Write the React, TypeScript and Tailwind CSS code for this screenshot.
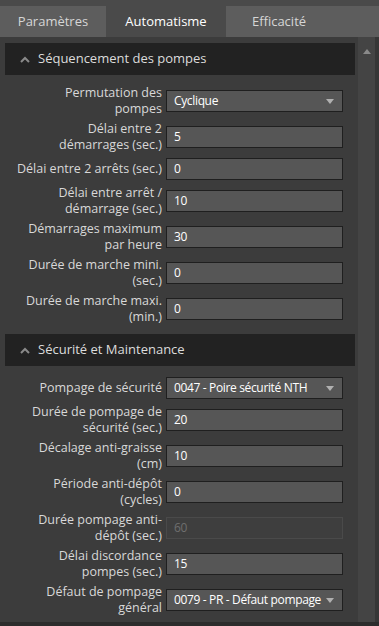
import React from "react";

type Field = {
  lines: string[];
  value: string;
  kind?: "select" | "input" | "disabled";
};

const sequence: Field[] = [
  { lines: ["Permutation des", "pompes"], value: "Cyclique", kind: "select" },
  { lines: ["Délai entre 2", "démarrages (sec.)"], value: "5" },
  { lines: ["Délai entre 2 arrêts (sec.)"], value: "0" },
  { lines: ["Délai entre arrêt /", "démarrage (sec.)"], value: "10" },
  { lines: ["Démarrages maximum", "par heure"], value: "30" },
  { lines: ["Durée de marche mini.", "(sec.)"], value: "0" },
  { lines: ["Durée de marche maxi.", "(min.)"], value: "0" },
];

const safety: Field[] = [
  { lines: ["Pompage de sécurité"], value: "0047 - Poire sécurité NTH", kind: "select" },
  { lines: ["Durée de pompage de", "sécurité (sec.)"], value: "20" },
  { lines: ["Décalage anti-graisse", "(cm)"], value: "10" },
  { lines: ["Période anti-dépôt", "(cycles)"], value: "0" },
  { lines: ["Durée pompage anti-", "dépôt (sec.)"], value: "60", kind: "disabled" },
  { lines: ["Délai discordance", "pompes (sec.)"], value: "15" },
  { lines: ["Défaut de pompage", "général"], value: "0079 - PR - Défaut pompage", kind: "select" },
];

const Chevron = () => (
  <svg width="10" height="7" viewBox="0 0 10 7" className="shrink-0">
    <path d="M1 6 L5 2 L9 6" fill="none" stroke="#8a8a8a" strokeWidth="2" />
  </svg>
);

const Row = ({ f }: { f: Field }) => {
  const box =
    f.kind === "disabled"
      ? "bg-[#3e3e3e] border-[#4a4a4a] text-[#6e6e6e]"
      : "bg-[#565656] border-[#1f1f1f] text-white";
  return (
    <div className="flex items-center min-h-[24px]">
      <div className="w-[161px] pr-[4px] text-right leading-[16px] text-[#d8d8d8] whitespace-nowrap">
        {f.lines.map((l) => (
          <div key={l}>{l}</div>
        ))}
      </div>
      <div
        className={`w-[177px] h-[22px] border flex items-center pl-[7px] pr-[8px] ${box}`}
      >
        <span className="flex-1 whitespace-nowrap text-[12px] tracking-[-0.35px]">{f.value}</span>
        {f.kind === "select" && (
          <svg width="8" height="5" viewBox="0 0 8 5" className="shrink-0">
            <path d="M0 0 H8 L4 5 Z" fill="#b0b0b0" />
          </svg>
        )}
      </div>
    </div>
  );
};

const Section = ({ title, fields, last }: { title: string; fields: Field[]; last?: boolean }) => (
  <div>
    <div className="h-[32px] bg-[#222222] flex items-center pl-[15px] gap-[8px] text-[#dcdcdc] text-[13px]">
      <Chevron />
      <span>{title}</span>
    </div>
    <div className={`pt-[10px] flex flex-col gap-[4px] ${last ? "pb-0" : "pb-[9px]"}`}>
      {fields.map((f) => (
        <Row key={f.lines.join(" ")} f={f} />
      ))}
    </div>
  </div>
);

export default function App() {
  return (
    <div className="w-[379px] h-[626px] bg-[#3c3c3c] flex flex-col overflow-hidden font-['Open_Sans',sans-serif] text-[12.5px]">
      <div className="h-[6px] bg-[#4a4a4a]" />
      <div className="h-[31px] bg-[#5d5d5d] flex text-[13px]">
        <div className="w-[106px] flex items-center justify-center text-[#d6d6d6]">Paramètres</div>
        <div className="w-[120px] flex items-center justify-center bg-[#4a4a4a] text-white">Automatisme</div>
        <div className="w-[106px] flex items-center justify-center text-[#d6d6d6]">Efficacité</div>
      </div>
      <div className="flex-1 flex min-h-0">
        <div className="w-[350px] ml-[5px] pt-[6px]">
          <Section title="Séquencement des pompes" fields={sequence} />
          <Section title="Sécurité et Maintenance" fields={safety} last />
        </div>
        <div className="ml-[3px] w-[17px] bg-[#444444] flex justify-center pt-[12px]">
          <svg width="8" height="5" viewBox="0 0 8 5">
            <path d="M0 5 H8 L4 0 Z" fill="#8a8a8a" />
          </svg>
        </div>
        <div className="flex-1 bg-[#363636]" />
      </div>
      <div className="h-[4px] bg-[#2c2c2c]" />
    </div>
  );
}
